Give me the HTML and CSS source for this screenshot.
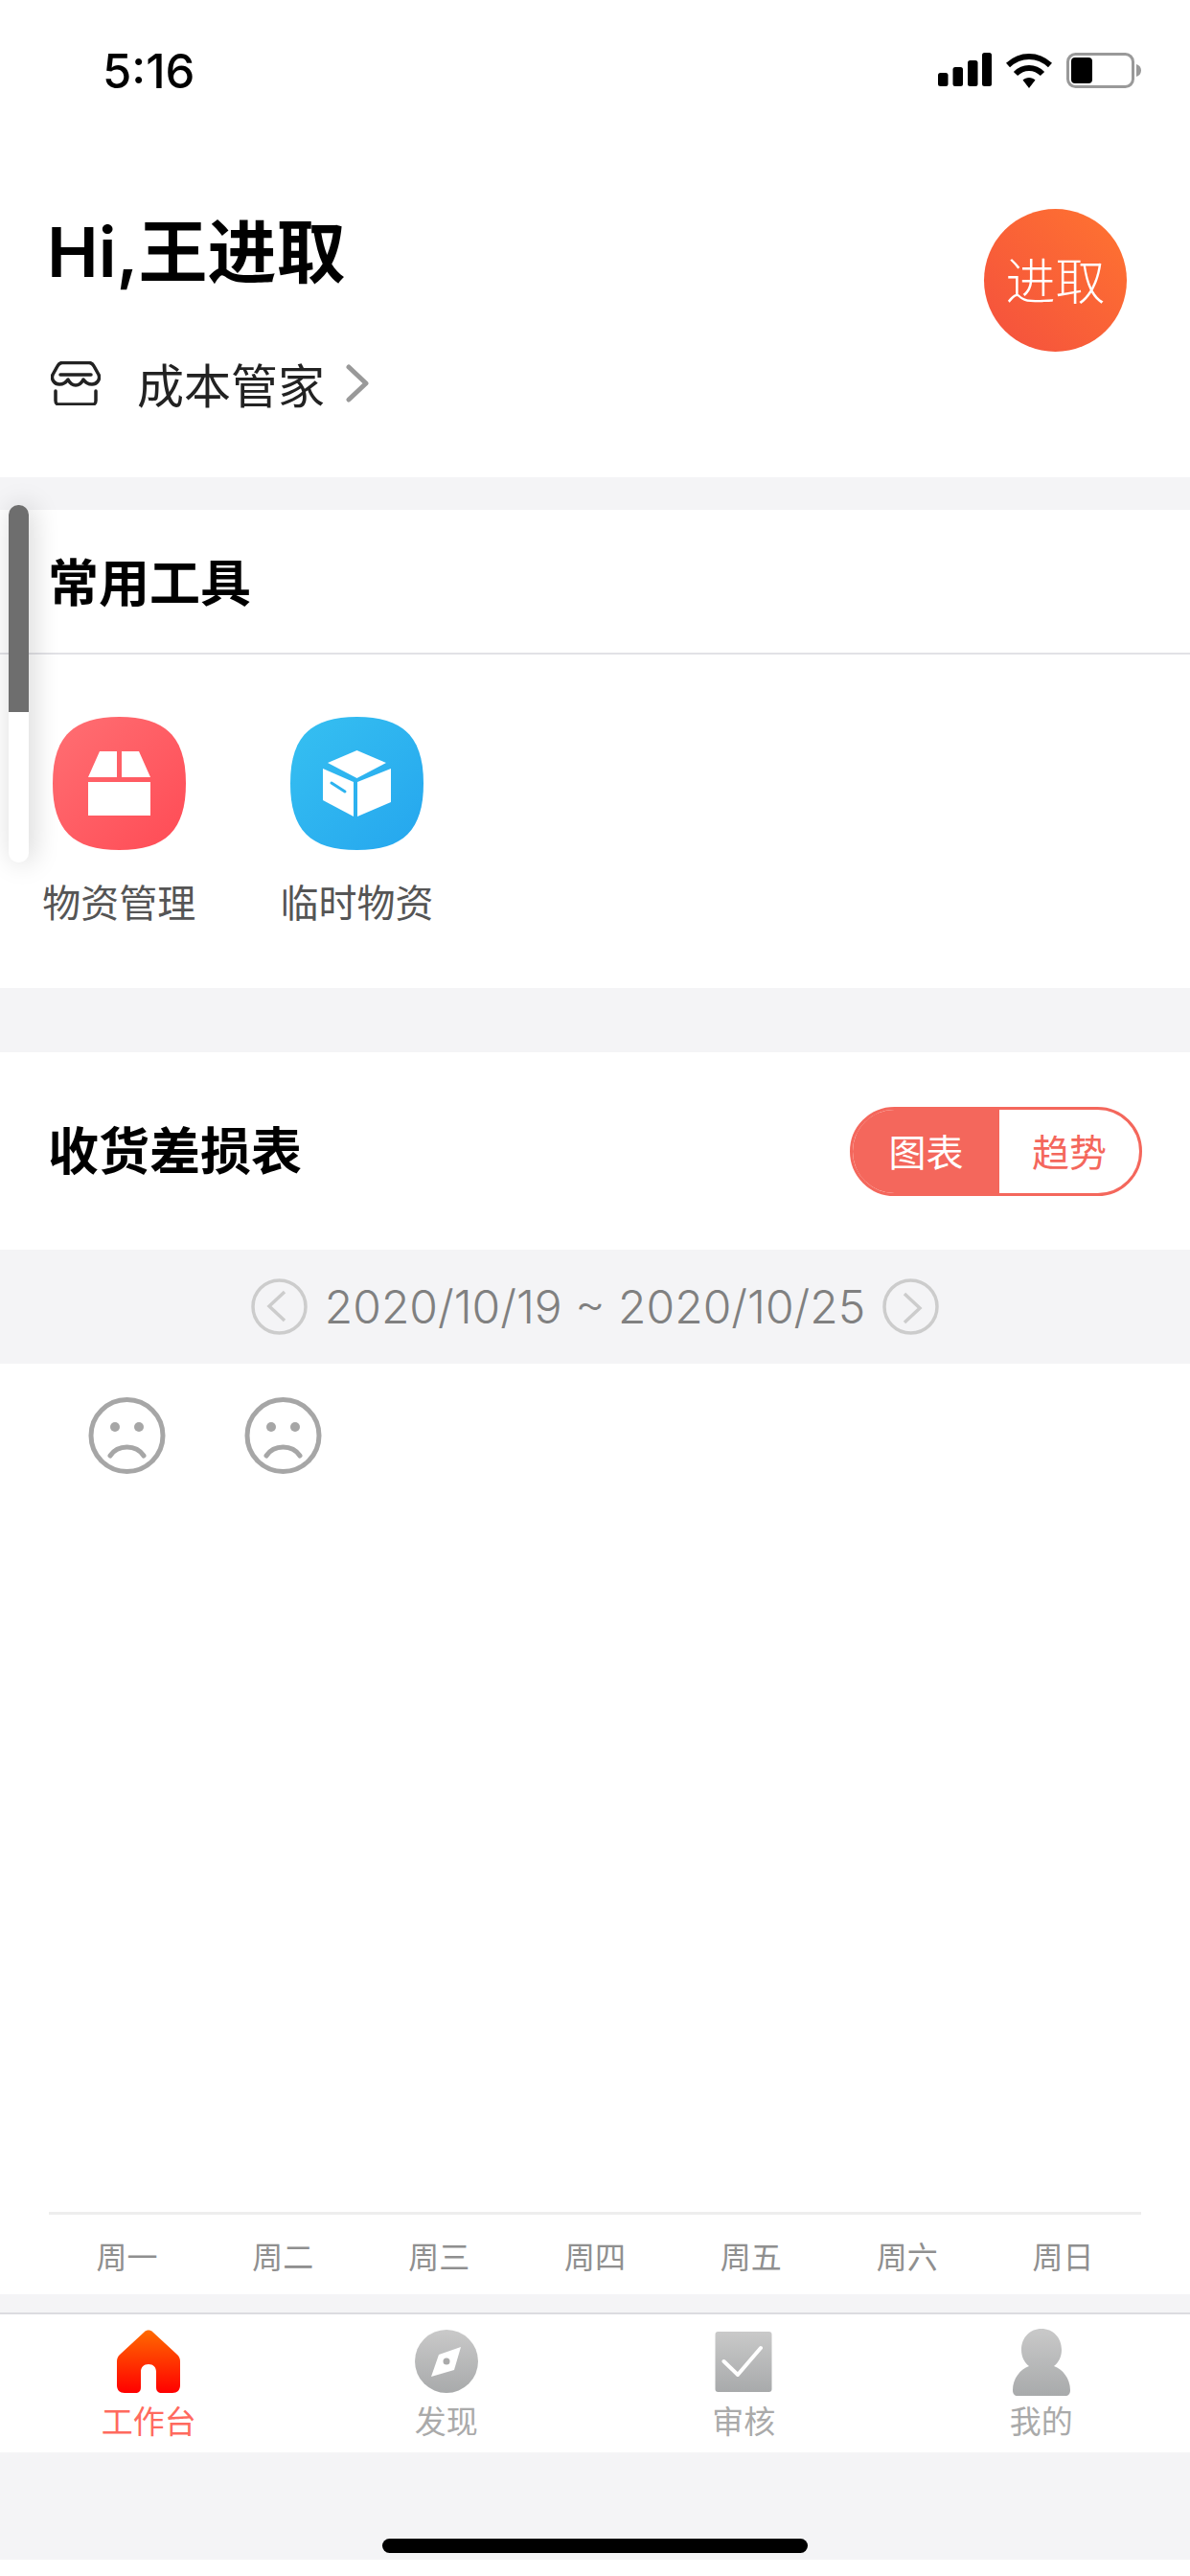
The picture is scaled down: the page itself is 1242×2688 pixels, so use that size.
FILE: index.html
```html
<!DOCTYPE html>
<html>
	<head>
		<meta charset="utf-8">
		<title>工作台</title>
		<link rel="stylesheet" href="styles.css">
	</head>
	<body>
		<div class="page">
			<div class="hero">
				<div class="status">
					<span class="time">5:16</span>
					<div class="status-icons">
						<svg width="56" height="35" viewBox="0 0 56 35" fill="#000">
							<rect x="0" y="21" width="10.500" height="14" rx="2.500"/>
							<rect x="15.500" y="15" width="10.500" height="20" rx="2.500"/>
							<rect x="31" y="8" width="10.500" height="27" rx="2.500"/>
							<rect x="46" y="0" width="10" height="35" rx="2.500"/>
						</svg>
						<svg width="48" height="37" viewBox="0 0 48 37">
							<path d="M2 13C15 1 33 1 46 13" fill="none" stroke="#000" stroke-width="6"/>
							<path d="M10 22C18 14 30 14 38 22" fill="none" stroke="#000" stroke-width="6"/>
							<path d="M17.500 28.500C21 25 27 25 30.500 28.500L24 37Z" fill="#000"/>
						</svg>
						<svg width="78" height="37" viewBox="0 0 78 37">
							<rect x="1.500" y="1.500" width="68" height="34" rx="8" fill="#fff" stroke="#999" stroke-width="3"/>
							<rect x="5" y="5" width="22" height="27" rx="4" fill="#000"/>
							<path d="M73 12C76 13 78 15 78 18.500C78 22 76 24 73 25Z" fill="#999"/>
						</svg>
					</div>
				</div>
				<div class="hero-main">
					<div>
						<h1 class="hello">Hi,王进取</h1>
						<div class="store">
							<svg width="52" height="46" viewBox="0 0 52 46" fill="none" stroke="#222" stroke-width="3.500" stroke-linecap="round" stroke-linejoin="round">
								<path d="M12 1.500H40C43 1.500 44 3 45 5L50 14C52 19 48 24 43 24C39 24 36 22 34 19C32 23 29 25 26 25C23 25 20 23 18 19C16 22 13 24 9 24C4 24 0 19 2 14L7 5C8 3 9 1.500 12 1.500Z"/>
								<path d="M10 14H42"/>
								<path d="M5 31V41C5 44 6 45 9 45H43C46 45 47 44 47 41V31"/>
							</svg>
							<span class="store-name">成本管家</span>
							<svg width="24" height="40" viewBox="0 0 24 40" fill="none" stroke="#999" stroke-width="5" stroke-linecap="round" stroke-linejoin="round">
								<path d="M3 3L21 20L3 37"/>
							</svg>
						</div>
					</div>
					<div class="avatar">进取</div>
				</div>
			</div>

			<div class="gap gap-top"></div>

			<div class="tools">
				<h2 class="tools-title">常用工具</h2>
				<div class="tool-list">
					<div class="tool">
						<svg class="tool-icon" width="139" height="139" viewBox="0 0 139 139">
							<defs>
								<linearGradient id="redBg" x1="0" y1="0" x2="1" y2="1">
									<stop offset="0" stop-color="#ff6f73"/>
									<stop offset="1" stop-color="#ff4b55"/>
								</linearGradient>
							</defs>
							<path d="M69.500 0C118 0 139 21 139 69.500C139 118 118 139 69.500 139C21 139 0 118 0 69.500C0 21 21 0 69.500 0Z" fill="url(#redBg)"/>
							<path d="M37 63L49 36H67V63ZM72 36H90L102 63H72ZM37 68H102V103H37Z" fill="#fff"/>
						</svg>
						<span class="tool-name">物资管理</span>
					</div>
					<div class="tool">
						<svg class="tool-icon" width="139" height="139" viewBox="0 0 139 139">
							<defs>
								<linearGradient id="blueBg" x1="0" y1="0" x2="1" y2="1">
									<stop offset="0" stop-color="#36c0f1"/>
									<stop offset="1" stop-color="#25a6ee"/>
								</linearGradient>
							</defs>
							<path d="M69.500 0C118 0 139 21 139 69.500C139 118 118 139 69.500 139C21 139 0 118 0 69.500C0 21 21 0 69.500 0Z" fill="url(#blueBg)"/>
							<path d="M69.500 35L100 48L69.500 64L39 48Z" fill="#fff"/>
							<path d="M34 54L66 68V104L34 87Z" fill="#fff"/>
							<path d="M70 68L105 54V89L70 104Z" fill="#fff"/>
							<path d="M43 69L57 78" stroke="#2db3ef" stroke-width="3" stroke-linecap="round"/>
						</svg>
						<span class="tool-name">临时物资</span>
					</div>
				</div>
			</div>

			<div class="gap gap-mid"></div>

			<div class="report">
				<div class="report-head">
					<h2 class="report-title">收货差损表</h2>
					<div class="switch">
						<span class="switch-item on">图表</span>
						<span class="switch-item">趋势</span>
					</div>
				</div>
				<div class="date-bar">
					<svg width="59" height="59" viewBox="0 0 59 59" fill="none" stroke="#ccc" stroke-width="3.500">
						<circle cx="29.500" cy="29.500" r="27.500"/>
						<path d="M35 14L19 29L35 44"/>
					</svg>
					<span class="date-text">2020/10/19 ~ 2020/10/25</span>
					<svg width="59" height="59" viewBox="0 0 59 59" fill="none" stroke="#ccc" stroke-width="3.500">
						<circle cx="29.500" cy="29.500" r="27.500"/>
						<path d="M23 16L39 31L23 46"/>
					</svg>
				</div>
				<div class="chart">
					<div class="faces">
						<div class="face-cell">
							<svg width="81" height="80" viewBox="0 0 81 80" fill="none" stroke="#a6a6a6" stroke-width="5" stroke-linecap="round">
								<circle cx="40.500" cy="40" r="37.500"/>
								<path d="M23 61C31 49 50 49 58 61"/>
								<circle cx="28" cy="31" r="5" fill="#a6a6a6" stroke="none"/>
								<circle cx="53" cy="31" r="5" fill="#a6a6a6" stroke="none"/>
							</svg>
						</div>
						<div class="face-cell">
							<svg width="81" height="80" viewBox="0 0 81 80" fill="none" stroke="#a6a6a6" stroke-width="5" stroke-linecap="round">
								<circle cx="40.500" cy="40" r="37.500"/>
								<path d="M23 61C31 49 50 49 58 61"/>
								<circle cx="28" cy="31" r="5" fill="#a6a6a6" stroke="none"/>
								<circle cx="53" cy="31" r="5" fill="#a6a6a6" stroke="none"/>
							</svg>
						</div>
					</div>
					<div class="week">
						<span>周一</span>
						<span>周二</span>
						<span>周三</span>
						<span>周四</span>
						<span>周五</span>
						<span>周六</span>
						<span>周日</span>
					</div>
				</div>
			</div>

			<div class="gap gap-low"></div>

			<div class="tabbar">
				<div class="tab current">
					<svg width="66" height="66" viewBox="0 0 66 66">
						<defs>
							<linearGradient id="homeBg" x1="0" y1="0" x2="0" y2="1">
								<stop offset="0" stop-color="#ff6a00"/>
								<stop offset="1" stop-color="#ff0000"/>
							</linearGradient>
						</defs>
						<path d="M29 2C31 0 35 0 37 2L63 26C65 28 66 30 66 33V58C66 63 63 66 58 66H47C43 66 41 64 41 60V44C41 39 38 36 33 36C28 36 25 39 25 44V60C25 64 23 66 19 66H8C3 66 0 63 0 58V33C0 30 1 28 3 26Z" fill="url(#homeBg)"/>
					</svg>
					<span>工作台</span>
				</div>
				<div class="tab">
					<svg width="66" height="66" viewBox="0 0 66 66">
						<defs>
							<linearGradient id="grayBg" x1="0" y1="0" x2="0" y2="1">
								<stop offset="0" stop-color="#c9c9c9"/>
								<stop offset="1" stop-color="#a8aaab"/>
							</linearGradient>
						</defs>
						<circle cx="33" cy="33" r="33" fill="url(#grayBg)"/>
						<path d="M48 18L41 42L17 49L25 26Z" fill="#fff"/>
						<circle cx="33" cy="33" r="3.500" fill="#aaa"/>
					</svg>
					<span>发现</span>
				</div>
				<div class="tab">
					<svg width="66" height="66" viewBox="0 0 66 66">
						<defs>
							<linearGradient id="checkBg" x1="0" y1="0" x2="0" y2="1">
								<stop offset="0" stop-color="#c9c9c9"/>
								<stop offset="1" stop-color="#a8aaab"/>
							</linearGradient>
						</defs>
						<rect x="3.500" y="2" width="59" height="63" rx="3" fill="url(#checkBg)"/>
						<path d="M12.500 33L27 47L51 19" fill="none" stroke="#fff" stroke-width="4" stroke-linecap="round" stroke-linejoin="round"/>
					</svg>
					<span>审核</span>
				</div>
				<div class="tab tab-user">
					<svg width="66" height="70" viewBox="0 0 66 70">
						<defs>
							<linearGradient id="userBg" x1="0" y1="0" x2="0" y2="1">
								<stop offset="0" stop-color="#c9c9c9"/>
								<stop offset="1" stop-color="#a8aaab"/>
							</linearGradient>
						</defs>
						<path d="M33 0C45 0 54 9 54 22C54 29 51 35 46 39C55 42 63 52 63 64C63 68 61 70 58 70H8C5 70 3 68 3 64C3 52 11 42 20 39C15 35 12 29 12 22C12 9 21 0 33 0Z" fill="url(#userBg)"/>
					</svg>
					<span>我的</span>
				</div>
			</div>

			<div class="home-area">
				<div class="home-bar"></div>
			</div>

			<div class="scroll-thumb">
				<div class="scroll-dark"></div>
			</div>
		</div>
	</body>
</html>
```
FILE: styles.css
```css
*{
	padding: 0;
	margin: 0;
	box-sizing: border-box;
}
body{
	background: #fff;
	font-family: "Noto Sans CJK SC", sans-serif;
}
.page{
	position: relative;
	width: 1242px;
	height: 2688px;
	background: #fff;
	overflow: hidden;
}
.gap{
	background: #f4f4f6;
}
.gap-top{
	height: 34px;
}
.gap-mid{
	height: 67px;
}
.gap-low{
	height: 19px;
}

/* status bar and greeting */
.hero{
	height: 498px;
	display: flex;
	flex-direction: column;
}
.status{
	height: 150px;
	padding: 52px 51px 0 107px;
	display: flex;
	justify-content: space-between;
}
.time{
	font-family: "Inter", sans-serif;
	font-size: 49px;
	font-weight: 500;
	line-height: 46px;
	color: #000;
}
.status-icons{
	display: flex;
	align-items: flex-start;
	gap: 15px;
	padding-top: 3px;
}
.hero-main{
	padding: 71px 66px 0 49px;
	display: flex;
	justify-content: space-between;
	align-items: flex-start;
}
.hello{
	font-family: "Inter", "Noto Sans CJK SC", sans-serif;
	font-size: 72px;
	font-weight: 600;
	line-height: 84px;
	color: #000;
}
.store{
	margin-top: 65px;
	margin-left: 4px;
	display: flex;
	align-items: center;
	color: #222;
}
.store-name{
	margin: 0 22px 0 38px;
	font-size: 49px;
	line-height: 60px;
}
.avatar{
	width: 149px;
	height: 149px;
	margin-top: -3px;
	padding-bottom: 4px;
	border-radius: 50%;
	background: linear-gradient(to top right, #f4503e, #ff7430);
	color: #fff;
	font-size: 52px;
	font-weight: 300;
	display: flex;
	align-items: center;
	justify-content: center;
}

/* tools */
.tools{
	height: 499px;
}
.tools-title{
	height: 151px;
	padding-left: 50px;
	border-bottom: 2px solid #e2e2e6;
	font-size: 53px;
	font-weight: 600;
	line-height: 146px;
	color: #000;
}
.tool-list{
	display: grid;
	grid-template-columns: repeat(5, 1fr);
	padding-top: 65px;
}
.tool{
	display: flex;
	flex-direction: column;
	align-items: center;
}
.tool-icon{
	display: block;
}
.tool-name{
	margin-top: 25px;
	font-size: 40px;
	line-height: 56px;
	color: #555;
}

/* report */
.report-head{
	height: 206px;
	padding: 57px 50px 0 50px;
	display: flex;
	justify-content: space-between;
	align-items: flex-start;
}
.report-title{
	font-size: 53px;
	font-weight: 600;
	line-height: 64px;
	margin-top: 11px;
	color: #000;
}
.switch{
	width: 305px;
	height: 93px;
	border: 3px solid #f4675c;
	border-radius: 47px;
	display: flex;
	overflow: hidden;
}
.switch-item{
	flex: 1;
	font-size: 39px;
	line-height: 84px;
	text-align: center;
	color: #f4675c;
}
.switch-item.on{
	flex: none;
	width: 153px;
	background: #f4675c;
	color: #fff;
}
.date-bar{
	height: 119px;
	background: #f4f4f6;
	display: flex;
	align-items: center;
	justify-content: center;
	gap: 18px;
}
.date-text{
	font-family: "Inter", sans-serif;
	font-size: 48px;
	font-weight: 300;
	color: #808080;
}
.chart{
	height: 971px;
	padding: 0 51px;
	display: flex;
	flex-direction: column;
	justify-content: space-between;
}
.faces{
	display: grid;
	grid-template-columns: repeat(7, 1fr);
	padding-top: 35px;
}
.face-cell{
	display: flex;
	justify-content: center;
}
.week{
	height: 86px;
	border-top: 3px solid #eee;
	display: grid;
	grid-template-columns: repeat(7, 1fr);
	font-size: 32px;
	line-height: 84px;
	text-align: center;
	color: #8f8f8f;
}

/* tab bar */
.tabbar{
	height: 146px;
	border-top: 2px solid #dcdce0;
	display: grid;
	grid-template-columns: repeat(4, 1fr);
	padding-top: 16px;
}
.tab{
	display: flex;
	flex-direction: column;
	align-items: center;
	font-size: 33px;
	line-height: 46px;
	color: #aaa;
}
.tab svg{
	display: block;
}
.tab span{
	margin-top: 5px;
}
.tab-user svg{
	margin: -1px 0 -3px;
}
.tab.current{
	color: #ff6a5e;
}
.home-area{
	height: 112px;
	background: #f4f4f6;
	padding-top: 90px;
	display: flex;
	justify-content: center;
}
.home-bar{
	width: 444px;
	height: 15px;
	border-radius: 8px;
	background: #000;
}

/* floating scroll bar */
.scroll-thumb{
	position: absolute;
	left: 9px;
	top: 527px;
	width: 21px;
	height: 373px;
	border-radius: 10px;
	background: #fff;
	box-shadow: 4px 0 28px rgba(0,0,0,0.18);
	overflow: hidden;
}
.scroll-dark{
	height: 216px;
	background: #6e6e6e;
}
```
